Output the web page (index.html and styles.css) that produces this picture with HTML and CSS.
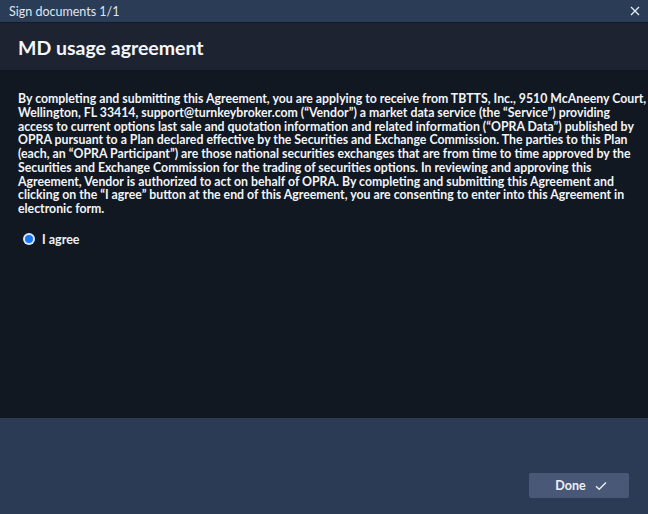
FILE: index.html
```html
<!DOCTYPE html>
<html>
<head>
<meta charset="utf-8">
<link rel="stylesheet" href="styles.css">
</head>
<body>
<div class="dialog">
  <div class="titlebar">
    <span class="titlebar-text">Sign documents 1/1</span>
    <svg class="close" width="10" height="10" viewBox="0 0 10 10"><path d="M1 1L9 9M9 1L1 9" stroke="#e6ecf5" stroke-width="1.3" fill="none"/></svg>
  </div>
  <div class="header"><h1 class="title">MD usage agreement</h1></div>
  <div class="content">
    <p class="text">By completing and submitting this Agreement, you are applying to receive from TBTTS, Inc., 9510 McAneeny Court,<br>Wellington, FL 33414, support@turnkeybroker.com (“Vendor”) a market data service (the “Service”) providing<br>access to current options last sale and quotation information and related information (“OPRA Data”) published by<br>OPRA pursuant to a Plan declared effective by the Securities and Exchange Commission. The parties to this Plan<br>(each, an “OPRA Participant”) are those national securities exchanges that are from time to time approved by the<br>Securities and Exchange Commission for the trading of securities options. In reviewing and approving this<br>Agreement, Vendor is authorized to act on behalf of OPRA. By completing and submitting this Agreement and<br>clicking on the “I agree” button at the end of this Agreement, you are consenting to enter into this Agreement in<br>electronic form.</p>
    <label class="agree"><span class="radio"><span class="dot"></span></span><span class="agree-text">I agree</span></label>
  </div>
  <div class="footer">
    <button class="done">Done
      <svg width="12" height="10" viewBox="0 0 12 10"><path d="M1 5.2L4.2 8.2L11 1.5" stroke="#e8edf5" stroke-width="1.4" fill="none"/></svg>
    </button>
  </div>
</div>
</body>
</html>
```
FILE: styles.css
```css
html, body { margin: 0; padding: 0; }
body { font-family: Lato, "Open Sans", sans-serif; color: #eef2f7; background: #111822; }
.dialog { width: 648px; height: 514px; display: flex; flex-direction: column; }
.titlebar { height: 22px; background: #2b3c57; border-bottom: 1px solid #141a25; display: flex; align-items: center; justify-content: space-between; padding: 0 8px 0 9px; box-sizing: content-box; }
.titlebar-text { font-size: 12.5px; color: #dfe6f0; }
.close { display: block; margin-top: -1px; }
.header { height: 47px; background: #1e2332; display: flex; align-items: center; padding-left: 18px; }
.title { margin: 0; font-size: 19.5px; font-weight: 700; color: #f3f6fa; padding-top: 1px; }
.content { flex: 1; background: #111822; padding: 22px 4px 0 18px; }
.text { margin: 0; font-size: 12.3px; font-weight: 700; line-height: 13.75px; letter-spacing: 0; white-space: nowrap; color: #f1f4f8; }
.agree { display: flex; align-items: center; gap: 7px; margin-top: 16px; padding-left: 5px; font-size: 12.5px; font-weight: 700; }
.radio { width: 12px; height: 12px; border-radius: 50%; background: #dbe7fb; display: flex; align-items: center; justify-content: center; }
.dot { width: 8px; height: 8px; border-radius: 50%; background: #1677f4; }
.footer { height: 96px; background: #2b3b55; display: flex; justify-content: flex-end; align-items: flex-start; padding-right: 19px; }
.done { margin-top: 55px; width: 100px; height: 25px; border: none; border-radius: 2px; background: #4a5878; color: #eef2f8; font-family: inherit; font-size: 12.5px; font-weight: 700; display: flex; align-items: center; justify-content: center; gap: 9px; padding: 0 0 0 4px; }
```
